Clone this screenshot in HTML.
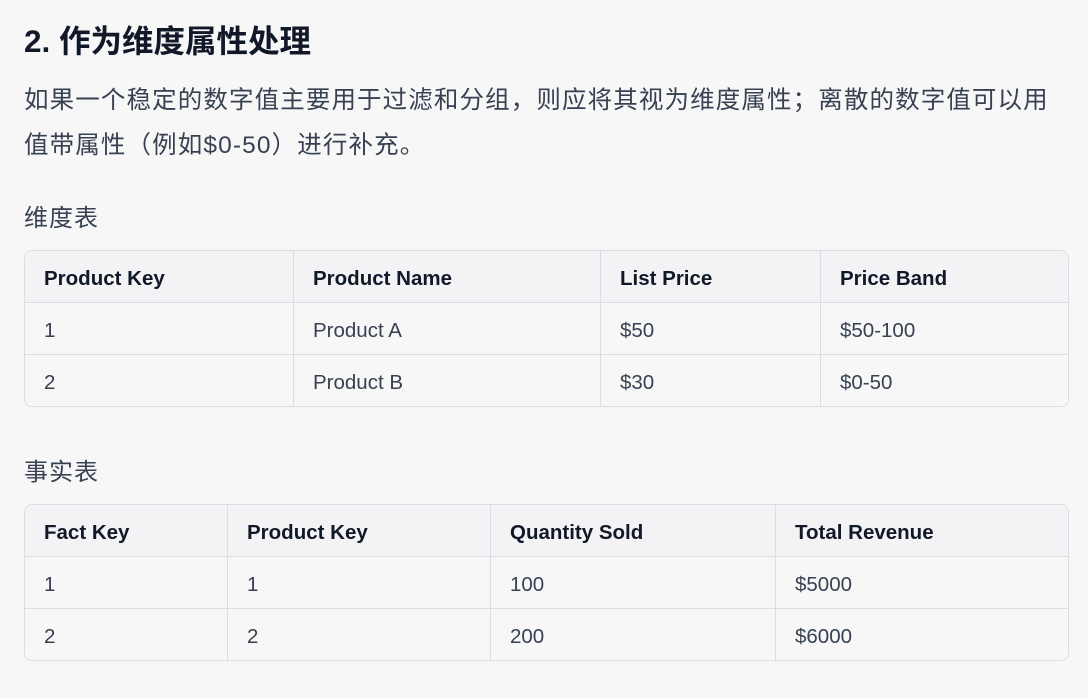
<!DOCTYPE html>
<html><head><meta charset="utf-8"><style>
body{margin:0;background:#f7f7f8;width:1088px;height:698px;overflow:hidden;font-family:"Liberation Sans","Noto Sans CJK SC",sans-serif;color:#374151}
.h{position:absolute;left:24px;top:19px;font-size:31.5px;font-weight:700;color:#111827;line-height:44px;white-space:nowrap}
.p{position:absolute;left:24px;top:78px;font-size:24.5px;line-height:45px;width:1070px;letter-spacing:1.12px;white-space:nowrap}
.l{position:absolute;left:24px;font-size:24px;line-height:32px;letter-spacing:1px}
table{position:absolute;left:24px;width:1045px;border-collapse:separate;border-spacing:0;border:1px solid #dcdce3;border-radius:8px;font-size:20.5px;overflow:hidden}
td,th{height:52px;padding:4px 0 0 19px;box-sizing:border-box;text-align:left;border-left:1px solid #dcdce3;border-top:1px solid #dcdce3}
th{border-top:none;height:51px;font-weight:700;color:#111827;background:#f3f3f5}
td{background:#f7f7f8}
tr>*:first-child{border-left:none}
</style></head><body>
<div class="h">2. 作为维度属性处理</div>
<div class="p">如果一个稳定的数字值主要用于过滤和分组，则应将其视为维度属性；离散的数字值可以用<br>值带属性（例如$0-50）进行补充。</div>
<div class="l" style="top:203px">维度表</div>
<table style="top:250px">
<colgroup><col style="width:268px"><col style="width:307px"><col style="width:220px"><col></colgroup>
<tr><th>Product Key</th><th>Product Name</th><th>List Price</th><th>Price Band</th></tr>
<tr><td>1</td><td>Product A</td><td>$50</td><td>$50-100</td></tr>
<tr><td>2</td><td>Product B</td><td>$30</td><td>$0-50</td></tr>
</table>
<div class="l" style="top:457px">事实表</div>
<table style="top:504px">
<colgroup><col style="width:202px"><col style="width:263px"><col style="width:285px"><col></colgroup>
<tr><th>Fact Key</th><th>Product Key</th><th>Quantity Sold</th><th>Total Revenue</th></tr>
<tr><td>1</td><td>1</td><td>100</td><td>$5000</td></tr>
<tr><td>2</td><td>2</td><td>200</td><td>$6000</td></tr>
</table>
</body></html>
